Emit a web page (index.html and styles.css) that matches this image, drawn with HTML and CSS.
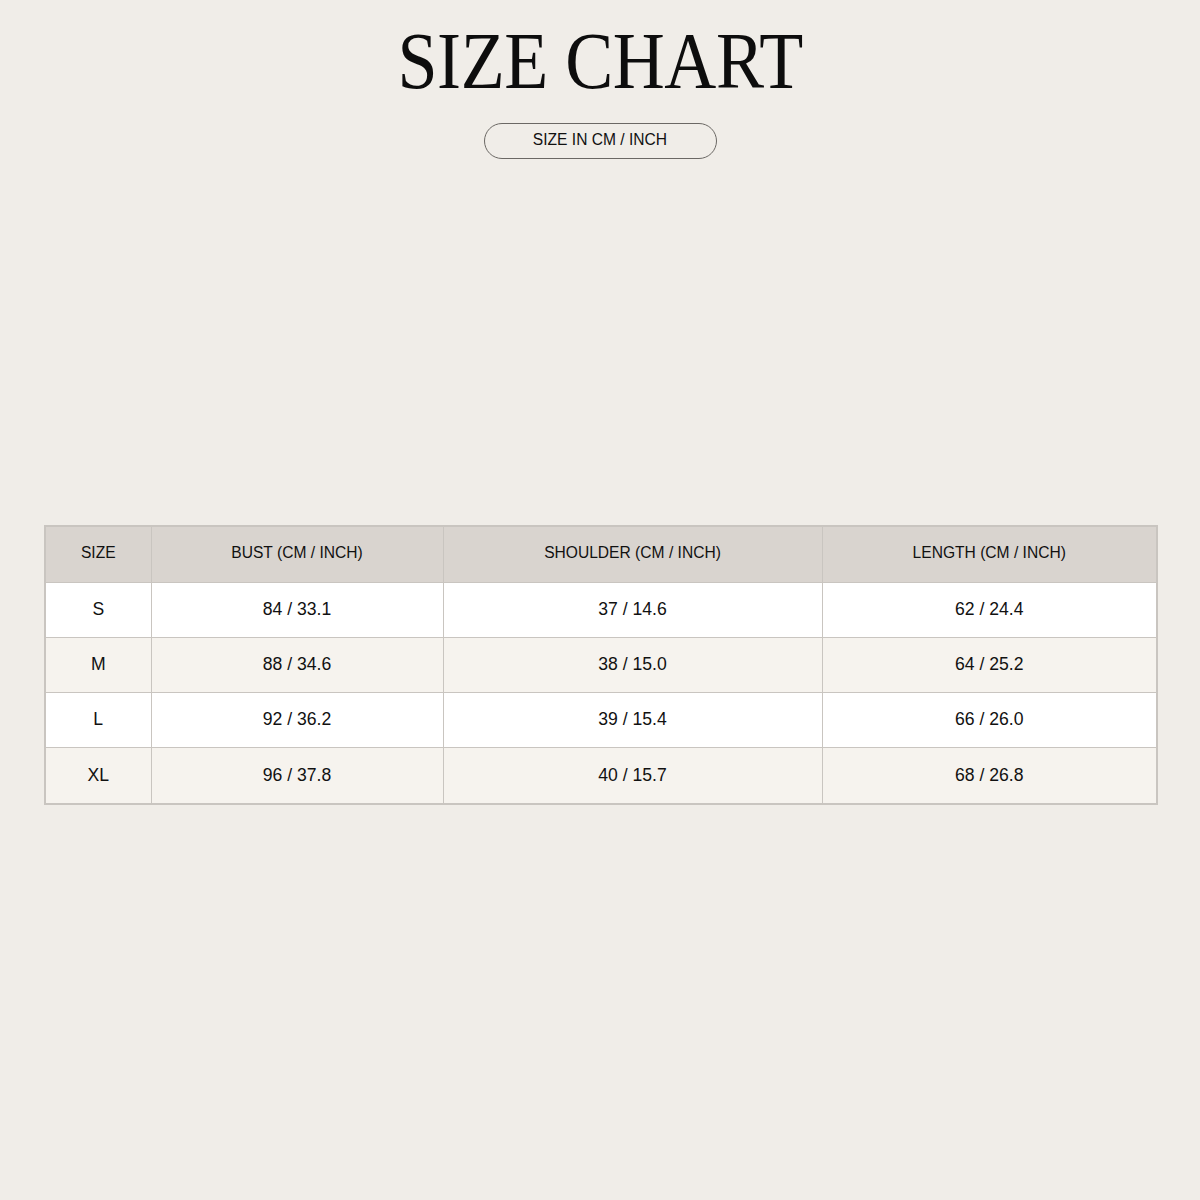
FILE: index.html
```html
<!DOCTYPE html>
<html lang="en">
<head>
<meta charset="utf-8">
<title>Size Chart</title>
<link rel="stylesheet" href="styles.css">
</head>
<body>
<main class="page">
  <header class="head">
    <h1 class="title">SIZE CHART</h1>
    <div class="pill">SIZE IN CM / INCH</div>
  </header>
  <table class="chart">
    <colgroup>
      <col class="c1"><col class="c2"><col class="c3"><col class="c4">
    </colgroup>
    <thead>
      <tr><th>SIZE</th><th>BUST (CM / INCH)</th><th>SHOULDER (CM / INCH)</th><th>LENGTH (CM / INCH)</th></tr>
    </thead>
    <tbody>
      <tr><td>S</td><td>84 / 33.1</td><td>37 / 14.6</td><td>62 / 24.4</td></tr>
      <tr><td>M</td><td>88 / 34.6</td><td>38 / 15.0</td><td>64 / 25.2</td></tr>
      <tr><td>L</td><td>92 / 36.2</td><td>39 / 15.4</td><td>66 / 26.0</td></tr>
      <tr><td>XL</td><td>96 / 37.8</td><td>40 / 15.7</td><td>68 / 26.8</td></tr>
    </tbody>
  </table>
</main>
</body>
</html>
```
FILE: styles.css
```css
html, body {
  margin: 0;
  padding: 0;
  background: #f0ede8;
}
.page {
  width: 1200px;
  height: 1200px;
  box-sizing: border-box;
  padding: 21px 44px 0 44px;
  font-family: "Liberation Sans", Arial, sans-serif;
  color: #111;
}
.head {
  display: flex;
  flex-direction: column;
  align-items: center;
}
.title {
  margin: 0;
  font-family: "Liberation Serif", "Times New Roman", serif;
  font-weight: normal;
  font-size: 80px;
  line-height: 80px;
  letter-spacing: -0.5px;
  color: #0d0d0d;
  transform: scaleX(0.9);
}
.pill {
  margin-top: 22px;
  width: 233px;
  height: 36px;
  box-sizing: border-box;
  border: 1px solid #6b6864;
  border-radius: 18px;
  display: flex;
  align-items: center;
  justify-content: center;
  padding-bottom: 2px;
  font-size: 15.6px;
  color: #111;
}
.chart {
  margin-top: 366px;
  width: 1112px;
  border-collapse: collapse;
  table-layout: fixed;
  border: 2px solid #c9c5c0;
  font-size: 17.6px;
}
.c1 { width: 106px; }
.c2 { width: 292px; }
.c3 { width: 379px; }
.c4 { width: 335px; }
.chart th, .chart td {
  height: 53.3px;
  padding: 0 0 1px;
  text-align: center;
  vertical-align: middle;
  border: 1px solid #c9c5c0;
  font-weight: normal;
}
.chart th {
  height: 52.5px;
  padding: 0 0 2px;
  background: #d9d4cf;
  font-size: 15.6px;
}
.chart tbody tr:nth-child(odd) td { background: #ffffff; }
.chart tbody tr:nth-child(even) td { background: #f6f3ee; }
```
